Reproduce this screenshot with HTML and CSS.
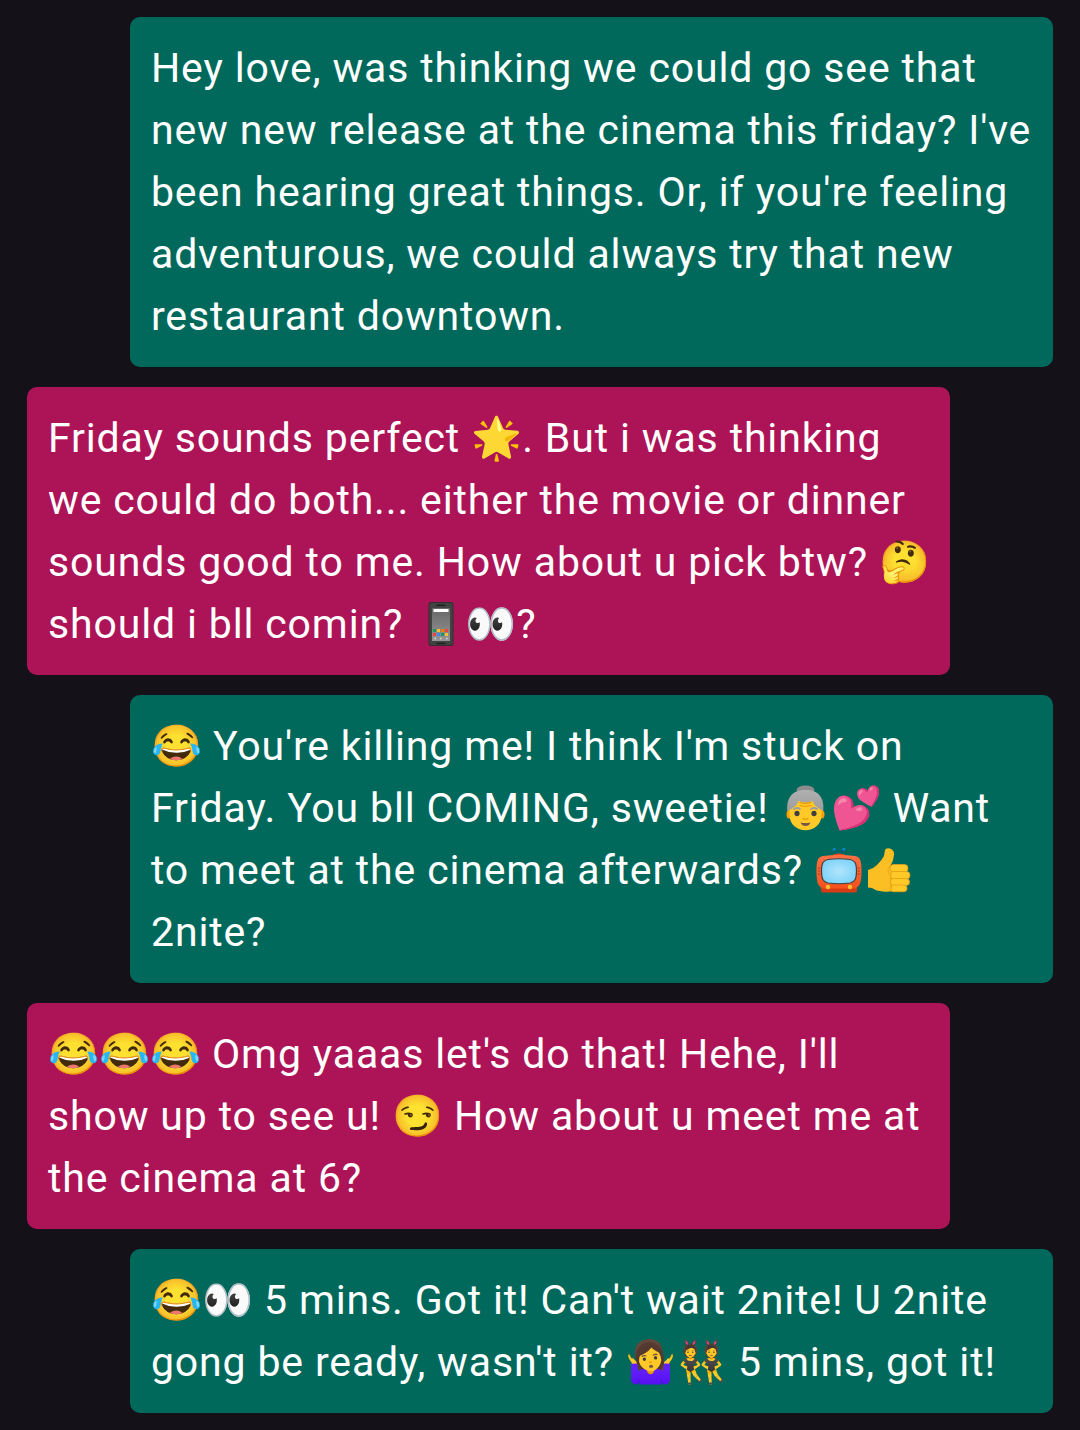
FILE: index.html
```html
<!DOCTYPE html>
<html lang="en"><head><meta charset="utf-8"><title>Chat</title><link rel="stylesheet" href="styles.css"></head>
<body><main class="chat">
<p class="msg sent">Hey love, was thinking we could go see that<br>new new release at the cinema this friday? I've<br>been hearing great things. Or, if you're feeling<br>adventurous, we could always try that new<br>restaurant downtown.</p>
<p class="msg received">Friday sounds perfect <span class="glyph">🌟</span>. But i was thinking<br>we could do both... either the movie or dinner<br>sounds good to me. How about u pick btw? <span class="glyph">🤔</span><br>should i bll comin? <svg class="emoji" viewBox="0 0 50 50" role="img" aria-label="Mobile phone">
<defs><linearGradient id="screen" x2="0" y2="1"><stop stop-color="#666"/><stop offset="1" stop-color="#969696"/></linearGradient></defs>
<g transform="translate(2 0)"><rect x="12.5" y="3" width="25" height="44" rx="3" fill="#303030"/><rect x="13.5" y="4" width="23" height="42" rx="2.3" fill="#424242"/>
<rect x="16" y="9" width="18" height="33" fill="url(#screen)"/><rect x="17.500" y="10" width="15" height="3" fill="#fff"/>
<path d="M21 6.2h8M21 44.500h8" stroke="#202020" stroke-width="1.4" stroke-linecap="round"/>
<path d="M17 30h3v3h-3zM25 34h3v3h-3z" fill="#159b62"/><path d="M21 30h3v3h-3zM29 34h3v3h-3z" fill="#fbc02d"/><path d="M25 30h3v3h-3z" fill="#f57c00"/><path d="M29 30h3v3h-3zM17 34h3v3h-3z" fill="#f44336"/><path d="M21 34h3v3h-3z" fill="#4285f4"/>
<path d="M18.500 39.500h1.500M24 39.500h1.500M30 39.500h1.500" stroke="#ddd" stroke-width="1.5"/></g></svg><span class="glyph">👀</span>?</p>
<p class="msg sent"><span class="glyph">😂</span> You're killing me! I think I'm stuck on<br>Friday. You bll COMING, sweetie! <svg class="emoji" viewBox="0 0 50 50" role="img" aria-label="Old woman">
<defs><linearGradient id="hair" x2="0" y2="1"><stop stop-color="#b0b0b0"/><stop offset="1" stop-color="#9b9b9b"/></linearGradient></defs>
<ellipse cx="25.500" cy="7" rx="9" ry="4.500" fill="#8c8c8c"/><path d="M7.500 30C5.500 15 12 7 25.500 7S45 15 43 30z" fill="url(#hair)"/>
<ellipse cx="9" cy="31.500" rx="2.500" ry="4" fill="#ffa000"/><ellipse cx="42" cy="31.500" rx="2.500" ry="4" fill="#ffa000"/>
<path d="M9.500 27q7-3.500 9-9 7 3 14 0 2 5.500 9 9v5c0 10-8 15.200-16 15.200S9.500 42 9.500 32z" fill="#ffca28"/>
<path d="M20 19.500q5.500 1.800 11 0M20 22.500q5.500 1.500 11 0M23 35.500q2.500 1.500 5 0" fill="none" stroke="#e59600" stroke-width="1.200" stroke-linecap="round"/>
<path d="M14 26q3-2 6 0M31 26q3-2 6 0" fill="none" stroke="#9e9e9e" stroke-width="2" stroke-linecap="round"/>
<ellipse cx="17" cy="30.500" rx="2.600" ry="2.800" fill="#404040"/><ellipse cx="34" cy="30.500" rx="2.600" ry="2.800" fill="#404040"/>
<path d="M20.500 39.500q5 1 10 0-1.500 3.500-5 3.500t-5-3.500z" fill="#795548"/></svg><span class="glyph">💕</span> Want<br>to meet at the cinema afterwards? <svg class="emoji" viewBox="0 0 50 50" role="img" aria-label="Television">
<defs><linearGradient id="case" x2="0" y2="1"><stop stop-color="#ff7043"/><stop offset="1" stop-color="#f4511e"/></linearGradient><radialGradient id="glass"><stop stop-color="#b3e5fc"/><stop offset="1" stop-color="#81d4fa"/></radialGradient></defs>
<path d="M21 5l4 6 4-6" fill="none" stroke="#01579b" stroke-width="1.200"/><circle cx="20.200" cy="4.200" r="1.400" fill="#0288d1"/><circle cx="29.800" cy="4.200" r="1.400" fill="#0288d1"/>
<path d="M18 11q1-2.500 7-2.500t7 2.500z" fill="#e64a19"/><path d="M7 39h36v6q0 2.500-2 2.500H9q-2 0-2-2.500z" fill="#d83b16"/>
<path d="M9 11q16-2 32 0c5 1 6.500 4 6.500 15 0 9-1 14-4 16q-1.500 1.500-4 1.500h-29q-2.500 0-4-1.500c-3-2-4-7-4-16C2.500 15 4 12 9 11z" fill="url(#case)"/>
<path d="M14 14.500q11-1.500 22 0c5 .7 6.500 4 6.500 11.500s-1.500 11-6.500 12q-11 1.500-22 0C9 37 7.500 33.500 7.500 26S9 15.200 14 14.500z" fill="url(#glass)" stroke="#424242" stroke-width="1.200"/>
<path d="M4 23h2.300M4 26h2.300M4 29h2.300M43.700 23H46M43.700 26H46M43.700 29H46" stroke="#bf360c" stroke-width="1"/>
<circle cx="14" cy="42" r="2.200" fill="#fbc02d"/><circle cx="36" cy="42" r="2.200" fill="#fbc02d"/></svg><svg class="emoji" viewBox="0 0 50 50" role="img" aria-label="Thumbs up">
<path d="M3 25q5-1 9-5 5-5 7-9l1-6q1-2.500 5-1.500 4.500 1.500 4 6.500-.5 6-3.500 10.500L30 25v20q-5 2.500-12 1.500-7-.5-11-3.500l-4-.5z" fill="#fbbf24"/>
<g fill="#ffc928" stroke="#e8a014" stroke-width=".8"><rect x="25" y="19.500" width="18" height="7.500" rx="3.700"/><rect x="25" y="26.500" width="20" height="7.500" rx="3.700"/><rect x="25" y="33.500" width="19.500" height="7" rx="3.500"/><rect x="25" y="40" width="17" height="6.700" rx="3.300"/></g>
<path d="M25.500 20q-4 4-2 9M26 28q-1.500 10 1 17" fill="none" stroke="#e8a014" stroke-width=".8"/></svg><br>2nite?</p>
<p class="msg received"><span class="glyph">😂😂😂</span> Omg yaaas let's do that! Hehe, I'll<br>show up to see u! <span class="glyph">😏</span> How about u meet me at<br>the cinema at 6?</p>
<p class="msg sent"><span class="glyph">😂👀</span> 5 mins. Got it! Can't wait 2nite! U 2nite<br>gong be ready, wasn't it? <span class="glyph">🤷‍♀️👯</span> 5 mins, got it!</p>
</main></body></html>
```
FILE: styles.css
```css
body { margin: 0; background: #141218; }
.chat { display: flex; flex-direction: column; gap: 20px; padding: 17px 27px; }
.msg { box-sizing: border-box; width: 923px; margin: 0; padding: 20px 21px; border-radius: 10px; color: #fff; font: 400 41px/62px Roboto, sans-serif; letter-spacing: 0.85px; white-space: nowrap; }
.sent { align-self: flex-end; background: #00695c; }
.received { align-self: flex-start; background: #ad1457; }
.glyph { letter-spacing: 0; }
.emoji { width: 50px; height: 50px; margin: -10px 1px -10px 0; vertical-align: -1px; }
```
